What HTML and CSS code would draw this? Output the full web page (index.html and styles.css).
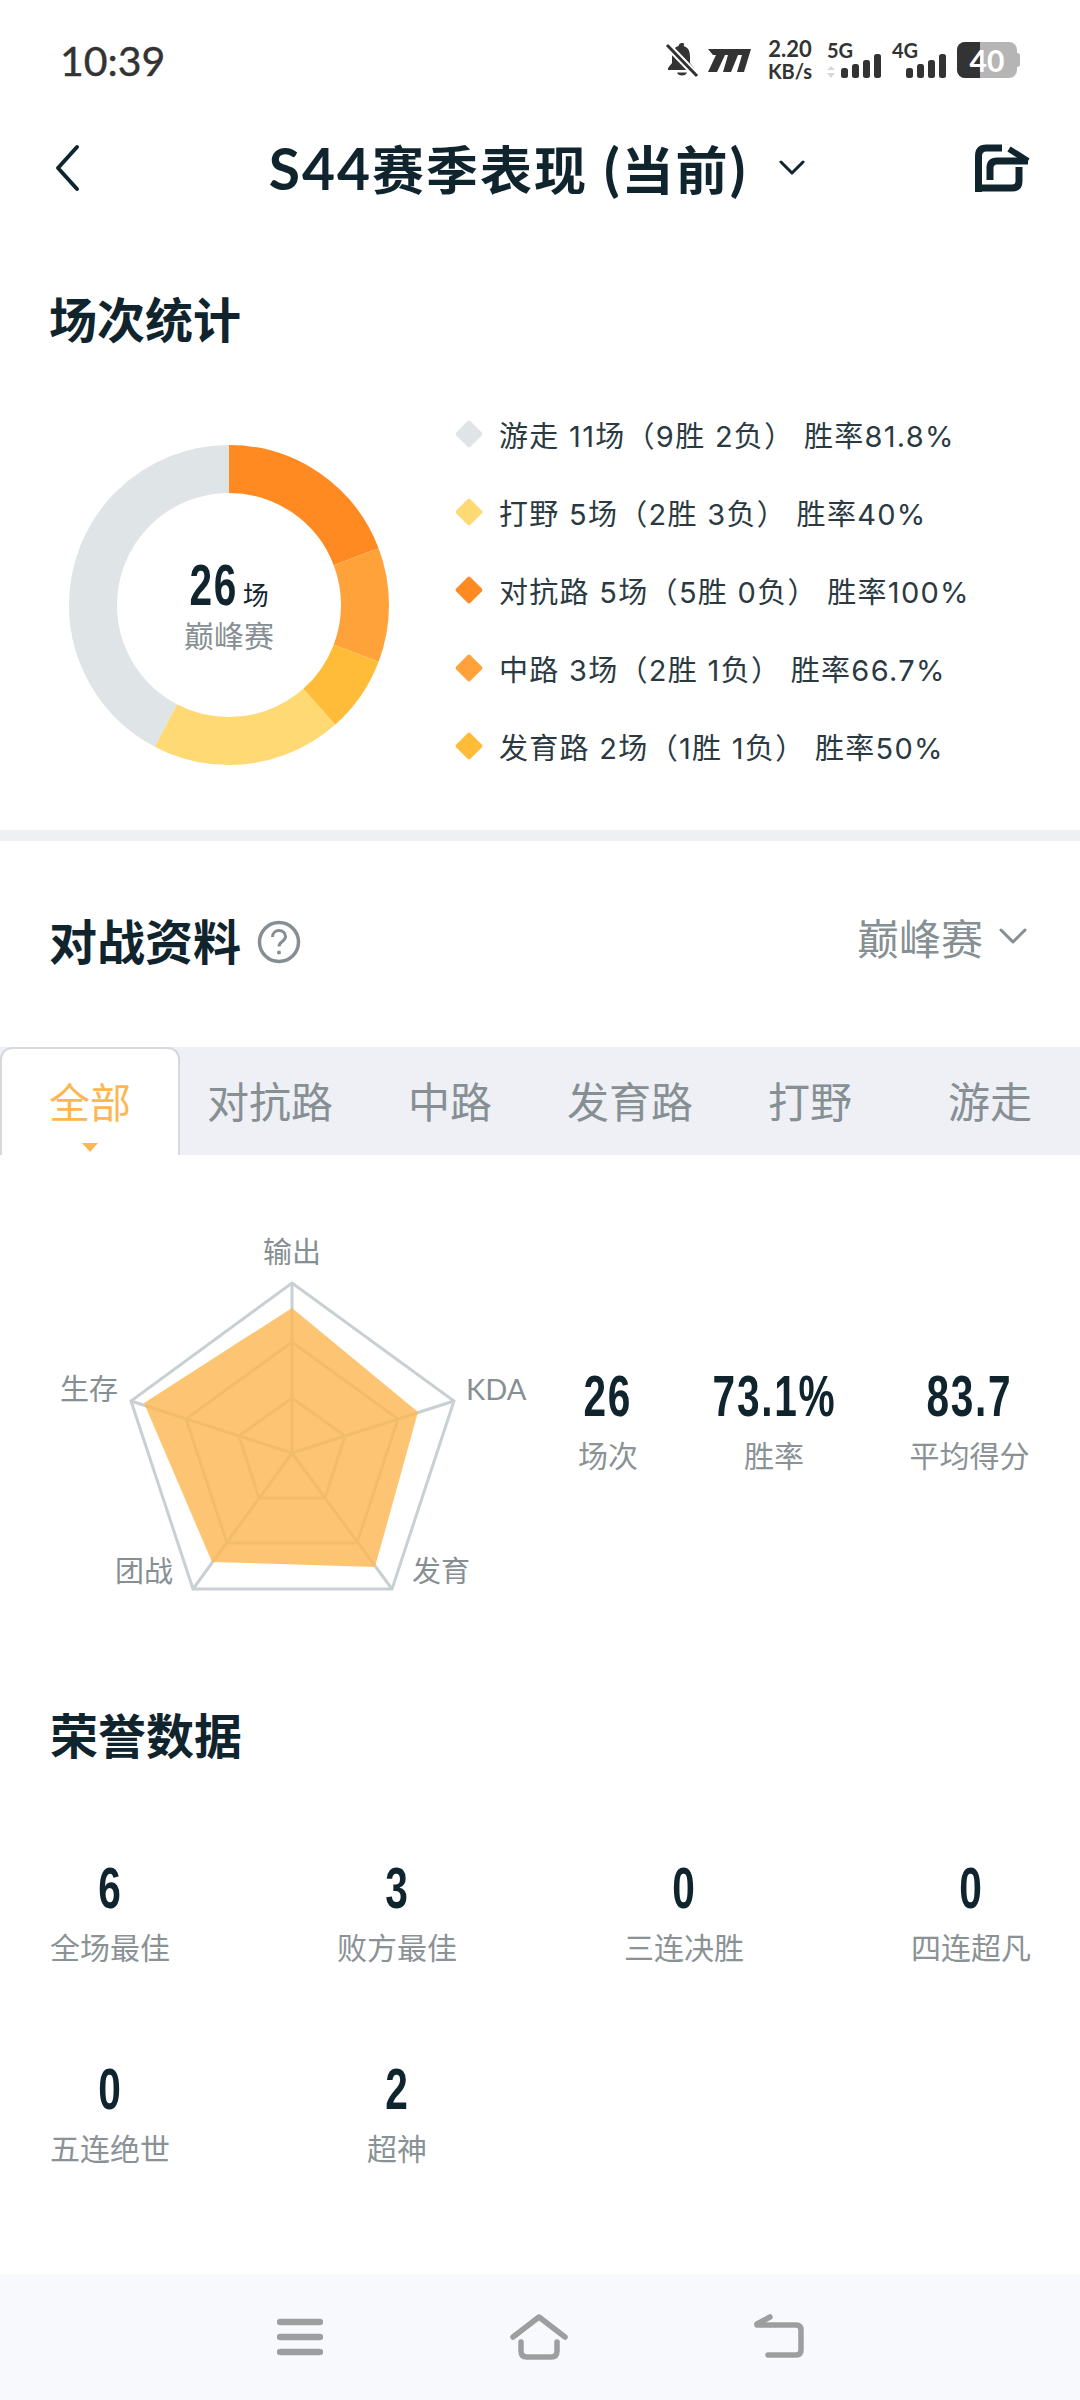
FILE: index.html
```html
<!DOCTYPE html>
<html lang="zh-CN">
<head>
    <meta charset="UTF-8">
    <meta name="viewport" content="width=device-width, initial-scale=1.0">
    <title>S44赛季表现</title>
    <link rel="stylesheet" href="styles.css">
</head>
<body>
    <div class="status-bar">
        <span class="clock">10:39</span>
        <div class="status-icons">
            <svg class="icon-bell" width="34" height="36" viewBox="0 0 34 36">
                <path d="M17 1c-2 0-3 1-3.500 3C8 5.500 7 10 7 15v6l-4 5v2h26v-2l-4-5v-6c0-5-1-9.500-6.500-11C20 2 19 1 17 1z" fill="#333"/>
                <path d="M12 30.500h10c-1 4-9 4-10 0z" fill="#333"/>
                <path d="M2 3l30 31" stroke="#fff" stroke-width="7"/>
                <path d="M2 3l30 31" stroke="#333" stroke-width="3"/>
            </svg>
            <svg class="icon-logo" width="44" height="24" viewBox="0 0 44 24">
                <path d="M0 1H43L36 24H29L34 7H30L23 24H15L20 7H17L9 24H0L8 7H5z" fill="#333"/>
            </svg>
            <div class="net-speed"><span>2.20</span><span class="net-unit">KB/s</span></div>
            <div class="signal signal-5g">
                <span class="signal-name">5G</span>
                <svg width="56" height="24" viewBox="0 0 56 24">
                    <path d="M4 12l-4 4h8zM4 24l-4-5h8z" fill="#d8d8d8"/>
                    <rect x="14" y="14" width="7" height="10" rx="2.500" fill="#333"/>
                    <rect x="25" y="10" width="7" height="14" rx="2.500" fill="#333"/>
                    <rect x="36" y="6" width="7" height="18" rx="2.500" fill="#333"/>
                    <rect x="47" y="0" width="7" height="24" rx="2.500" fill="#333"/>
                </svg>
            </div>
            <div class="signal signal-4g">
                <span class="signal-name">4G</span>
                <svg width="56" height="24" viewBox="0 0 56 24">
                    <rect x="14" y="14" width="7" height="10" rx="2.500" fill="#333"/>
                    <rect x="25" y="10" width="7" height="14" rx="2.500" fill="#333"/>
                    <rect x="36" y="6" width="7" height="18" rx="2.500" fill="#333"/>
                    <rect x="47" y="0" width="7" height="24" rx="2.500" fill="#333"/>
                </svg>
            </div>
            <div class="battery"><span class="battery-level"></span><span class="battery-text">40</span></div>
        </div>
    </div>

    <header class="top-bar">
        <svg width="44" height="48" viewBox="0 0 44 48">
            <path d="M22 3L3 24l19 21" fill="none" stroke="#10242e" stroke-width="4" stroke-linecap="round" stroke-linejoin="round"/>
        </svg>
        <div class="top-title">
            <h1><span class="title-latin">S44</span>赛季表现<span class="title-latin"> (</span>当前<span class="title-latin">)</span></h1>
            <svg class="chevron" width="26" height="16" viewBox="0 0 26 16">
                <path d="M2 2l11 11L24 2" fill="none" stroke="#10242e" stroke-width="3" stroke-linecap="round" stroke-linejoin="round"/>
            </svg>
        </div>
        <svg width="55" height="48" viewBox="15 14 55 48">
            <path d="M18.500 62V26q0-8 8-8H42" fill="none" stroke="#10242e" stroke-width="7"/>
            <path d="M15 58h37q7 0 7-7V37" fill="none" stroke="#10242e" stroke-width="7"/>
            <path d="M30 50V38q0-7 7-7h31" fill="none" stroke="#10242e" stroke-width="7"/>
            <path d="M49 19l19 12" fill="none" stroke="#10242e" stroke-width="6"/>
        </svg>
    </header>

    <section class="match-stats">
        <h2 class="section-title">场次统计</h2>
        <div class="match-row">
            <div class="donut">
                <svg width="320" height="320" viewBox="0 0 320 320">
                    <g fill="none" stroke-width="48" transform="rotate(-90 160 160)">
                        <circle cx="160" cy="160" r="136" pathLength="26" stroke="#ff8a22" stroke-dasharray="5 21"/>
                        <circle cx="160" cy="160" r="136" pathLength="26" stroke="#ffa23a" stroke-dasharray="3 23" stroke-dashoffset="-5"/>
                        <circle cx="160" cy="160" r="136" pathLength="26" stroke="#ffbc38" stroke-dasharray="2 24" stroke-dashoffset="-8"/>
                        <circle cx="160" cy="160" r="136" pathLength="26" stroke="#ffd974" stroke-dasharray="5 21" stroke-dashoffset="-10"/>
                        <circle cx="160" cy="160" r="136" pathLength="26" stroke="#dfe4e7" stroke-dasharray="11 15" stroke-dashoffset="-15"/>
                    </g>
                </svg>
                <div class="donut-center">
                    <div class="donut-count"><span class="num">26</span><span class="donut-unit">场</span></div>
                    <div class="donut-label">巅峰赛</div>
                </div>
            </div>
            <ul class="legend">
                <li><span class="diamond gray"></span>游走 11场（9胜 2负） 胜率81.8%</li>
                <li><span class="diamond pale"></span>打野 5场（2胜 3负） 胜率40%</li>
                <li><span class="diamond deep"></span>对抗路 5场（5胜 0负） 胜率100%</li>
                <li><span class="diamond mid"></span>中路 3场（2胜 1负） 胜率66.7%</li>
                <li><span class="diamond amber"></span>发育路 2场（1胜 1负） 胜率50%</li>
            </ul>
        </div>
    </section>

    <section class="battle-data">
        <div class="battle-head">
            <h2 class="section-title">对战资料</h2>
            <svg class="help" width="44" height="44" viewBox="0 0 44 44">
                <circle cx="22" cy="22" r="19.500" fill="none" stroke="#858f93" stroke-width="3.500"/>
                <path d="M15.500 17c0-4 3-6.500 6.500-6.500s6.500 2.500 6.500 6c0 5-6.500 5-6.500 10" fill="none" stroke="#858f93" stroke-width="3"/>
                <circle cx="22" cy="32.500" r="2" fill="#858f93"/>
            </svg>
            <div class="mode-select">
                <span>巅峰赛</span>
                <svg width="28" height="16" viewBox="0 0 28 16">
                    <path d="M2 2l12 12L26 2" fill="none" stroke="#858f93" stroke-width="3" stroke-linecap="round" stroke-linejoin="round"/>
                </svg>
            </div>
        </div>

        <div class="tabs">
            <div class="tab active">全部</div>
            <div class="tab">对抗路</div>
            <div class="tab">中路</div>
            <div class="tab">发育路</div>
            <div class="tab">打野</div>
            <div class="tab">游走</div>
        </div>

        <div class="radar-row">
            <svg class="radar" width="560" height="440" viewBox="0 1200 560 440">
                <polygon points="292,1283 454,1401 392,1589 193,1589 131,1401" fill="none" stroke="#c8d0d3" stroke-width="3"/>
                <polygon points="292,1342 398,1419 357,1543 227,1543 186,1419" fill="none" stroke="#c8d0d3" stroke-width="3"/>
                <polygon points="292,1398 345,1436 325,1498 259,1498 239,1436" fill="none" stroke="#c8d0d3" stroke-width="3"/>
                <path d="M292 1453V1283M292 1453L454 1401M292 1453L392 1589M292 1453L193 1589M292 1453L131 1401" stroke="#c8d0d3" stroke-width="3"/>
                <polygon points="292,1308 418,1412 375,1567 212,1562 144,1403" fill="#fdb750" fill-opacity="0.8"/>
                <text class="radar-label" x="292" y="1263" text-anchor="middle">输出</text>
                <text class="radar-label" x="466" y="1400">KDA</text>
                <text class="radar-label" x="412" y="1582">发育</text>
                <text class="radar-label" x="115" y="1582">团战</text>
                <text class="radar-label" x="60" y="1400">生存</text>
            </svg>
            <div class="summary">
                <div class="summary-item"><div class="num">26</div><div class="caption">场次</div></div>
                <div class="summary-item"><div class="num">73.1%</div><div class="caption">胜率</div></div>
                <div class="summary-item"><div class="num">83.7</div><div class="caption">平均得分</div></div>
            </div>
        </div>
    </section>

    <section class="honor">
        <h2 class="section-title">荣誉数据</h2>
        <div class="honor-grid">
            <div class="honor-item"><div class="num">6</div><div class="caption">全场最佳</div></div>
            <div class="honor-item"><div class="num">3</div><div class="caption">败方最佳</div></div>
            <div class="honor-item"><div class="num">0</div><div class="caption">三连决胜</div></div>
            <div class="honor-item"><div class="num">0</div><div class="caption">四连超凡</div></div>
            <div class="honor-item"><div class="num">0</div><div class="caption">五连绝世</div></div>
            <div class="honor-item"><div class="num">2</div><div class="caption">超神</div></div>
        </div>
    </section>

    <nav class="nav-bar">
        <svg width="46" height="38" viewBox="0 0 46 38">
            <path d="M3 4h40M3 19h40M3 34h40" stroke="#9c9e9f" stroke-width="6.500" stroke-linecap="round"/>
        </svg>
        <svg width="58" height="46" viewBox="0 0 58 46">
            <path d="M3 23L29 3l26 20" fill="none" stroke="#9c9e9f" stroke-width="5.500" stroke-linecap="round" stroke-linejoin="round"/>
            <path d="M11 28v9q0 6 6 6h24q6 0 6-6v-9" fill="none" stroke="#9c9e9f" stroke-width="5.500" stroke-linecap="round"/>
        </svg>
        <svg class="nav-back" width="50" height="44" viewBox="0 0 50 44">
            <path d="M3 11h39q5 0 5 5v20q0 5-5 5H14" fill="none" stroke="#9c9e9f" stroke-width="5.500" stroke-linecap="round"/>
            <path d="M3 10l13-7" fill="none" stroke="#9c9e9f" stroke-width="5.500" stroke-linecap="round"/>
        </svg>
    </nav>
</body>
</html>
```

FILE: styles.css
```css
* {
    box-sizing: border-box;
}

body {
    margin: 0;
    width: 1080px;
    height: 2400px;
    display: flex;
    flex-direction: column;
    background-color: #fff;
    color: #10242e;
    font-family: Lato, "Noto Sans CJK SC", sans-serif;
    overflow: hidden;
}

h1, h2, ul {
    margin: 0;
    padding: 0;
}

svg {
    display: block;
    flex-shrink: 0;
}

/* no condensed font installed, so the figures get squeezed */
.num {
    font-family: "Liberation Sans", sans-serif;
    font-weight: 700;
    font-size: 58px;
    line-height: 60px;
    letter-spacing: 2.5px;
    color: #10242e;
    white-space: nowrap;
    transform: scaleX(0.7);
}

.caption {
    margin-top: 9px;
    font-size: 30px;
    line-height: 40px;
    color: #8a9296;
    white-space: nowrap;
}

.section-title {
    font-size: 48px;
    line-height: 60px;
    font-weight: 700;
}

/* status bar */
.status-bar {
    height: 120px;
    padding: 0 60px;
    display: flex;
    justify-content: space-between;
    align-items: center;
    color: #333;
}

.clock {
    font-size: 41px;
    font-weight: 400;
    -webkit-text-stroke: 0.4px #333;
}

.status-icons {
    display: flex;
    align-items: center;
}

.icon-logo {
    margin-left: 9px;
}

.net-speed {
    margin-left: 15px;
    width: 46px;
    display: flex;
    flex-direction: column;
    align-items: center;
    font-size: 22px;
    line-height: 22px;
    font-weight: 700;
    white-space: nowrap;
}

.net-unit {
    font-size: 20px;
}

.signal {
    position: relative;
    width: 56px;
    height: 36px;
    margin-left: 14px;
    display: flex;
    align-items: flex-end;
}

.signal-4g {
    margin-left: 9px;
}

.signal-name {
    position: absolute;
    left: 0;
    top: -4px;
    font-size: 20px;
    line-height: 24px;
    font-weight: 700;
}

.battery {
    position: relative;
    width: 60px;
    height: 36px;
    margin-left: 9px;
    margin-right: 3px;
    border-radius: 8px;
    background-color: #b5b5b5;
    display: flex;
    align-items: center;
    justify-content: center;
}

.battery::after {
    content: "";
    position: absolute;
    right: -3px;
    top: 11px;
    width: 3px;
    height: 14px;
    border-radius: 0 3px 3px 0;
    background-color: #b5b5b5;
}

.battery-level {
    position: absolute;
    left: 0;
    top: 0;
    bottom: 0;
    width: 23px;
    border-radius: 8px 0 0 8px;
    background-color: #333;
}

.battery-text {
    position: relative;
    font-size: 30px;
    font-weight: 700;
    color: #fff;
}

/* top bar */
.top-bar {
    height: 96px;
    padding: 0 50px 0 55px;
    display: flex;
    justify-content: space-between;
    align-items: center;
}

.top-title {
    display: flex;
    align-items: center;
}

.top-title h1 {
    margin-top: -2px;
    font-size: 52px;
    font-weight: 700;
    letter-spacing: 2px;
    white-space: pre;
}

.title-latin {
    font-size: 57px;
}

.chevron {
    margin-left: 32px;
}

/* match stats */
.match-stats {
    padding: 74px 0 45px;
    border-bottom: 11px solid #eef0f3;
}

.match-stats .section-title {
    padding-left: 49px;
}

.match-row {
    margin-top: 47px;
    padding-left: 69px;
    display: flex;
    align-items: flex-start;
}

.donut {
    position: relative;
    margin-top: 48px;
}

.donut-center {
    position: absolute;
    inset: 0;
    display: flex;
    flex-direction: column;
    align-items: center;
    justify-content: center;
}

.donut-count {
    display: flex;
    align-items: baseline;
}

.donut-count .num {
    margin: 0 -10px;
}

.donut-unit {
    margin-left: 4px;
    font-size: 26px;
}

.donut-label {
    font-size: 30px;
    line-height: 40px;
    color: #868f93;
}

.legend {
    list-style: none;
    margin-left: 70px;
    margin-top: -2px;
}

.legend li {
    height: 78px;
    display: flex;
    align-items: center;
    font-family: Inter, "Noto Sans CJK SC", sans-serif;
    font-size: 29px;
    letter-spacing: 1.3px;
    color: #2b3a42;
    white-space: pre;
}

.diamond {
    width: 20px;
    height: 20px;
    margin-right: 20px;
    transform: rotate(45deg);
    border-radius: 2px;
}

.diamond.gray { background-color: #dfe4e7; }
.diamond.pale { background-color: #ffd974; }
.diamond.deep { background-color: #ff8a22; }
.diamond.mid { background-color: #ffa23a; }
.diamond.amber { background-color: #ffbc38; }

/* battle data */
.battle-data {
    padding-top: 71px;
}

.battle-head {
    padding: 0 53px 0 49px;
    display: flex;
    align-items: center;
}

.help {
    margin-left: 16px;
}

.mode-select {
    margin-left: auto;
    margin-top: -12px;
    display: flex;
    align-items: center;
    font-size: 42px;
    color: #868f93;
}

.mode-select svg {
    margin-left: 16px;
}

.tabs {
    margin-top: 75px;
    height: 108px;
    display: flex;
    background-color: #eef0f5;
}

.tab {
    position: relative;
    width: 180px;
    padding-bottom: 4px;
    display: flex;
    align-items: center;
    justify-content: center;
    font-size: 42px;
    color: #868f93;
}

.tab.active {
    background-color: #fff;
    color: #fdb750;
    border: 2px solid #d5d8dc;
    border-bottom: none;
    border-radius: 12px 12px 0 0;
    font-size: 41px;
}

.tab.active::after {
    content: "";
    position: absolute;
    left: 80px;
    bottom: 3px;
    border-left: 8px solid transparent;
    border-right: 8px solid transparent;
    border-top: 9px solid #fdb750;
}

.radar-row {
    margin-top: 45px;
    display: flex;
    align-items: center;
}

.radar-label {
    font-size: 29px;
    fill: #868f93;
}

.summary {
    margin-left: 19px;
    display: grid;
    grid-template-columns: 58px 122px 117px;
    column-gap: 76px;
}

.summary-item,
.honor-item {
    display: flex;
    flex-direction: column;
    align-items: center;
}

/* honor */
.honor {
    padding: 66px 49px 0 50px;
}

.honor-grid {
    margin-top: 92px;
    display: grid;
    grid-template-columns: repeat(4, 120px);
    justify-content: space-between;
    row-gap: 92px;
}

/* nav bar */
.nav-bar {
    margin-top: auto;
    height: 126px;
    padding: 0 276px 0 277px;
    display: flex;
    justify-content: space-between;
    align-items: center;
    background-color: #f8f9fd;
}

.nav-back {
    margin-top: -2px;
}
```
